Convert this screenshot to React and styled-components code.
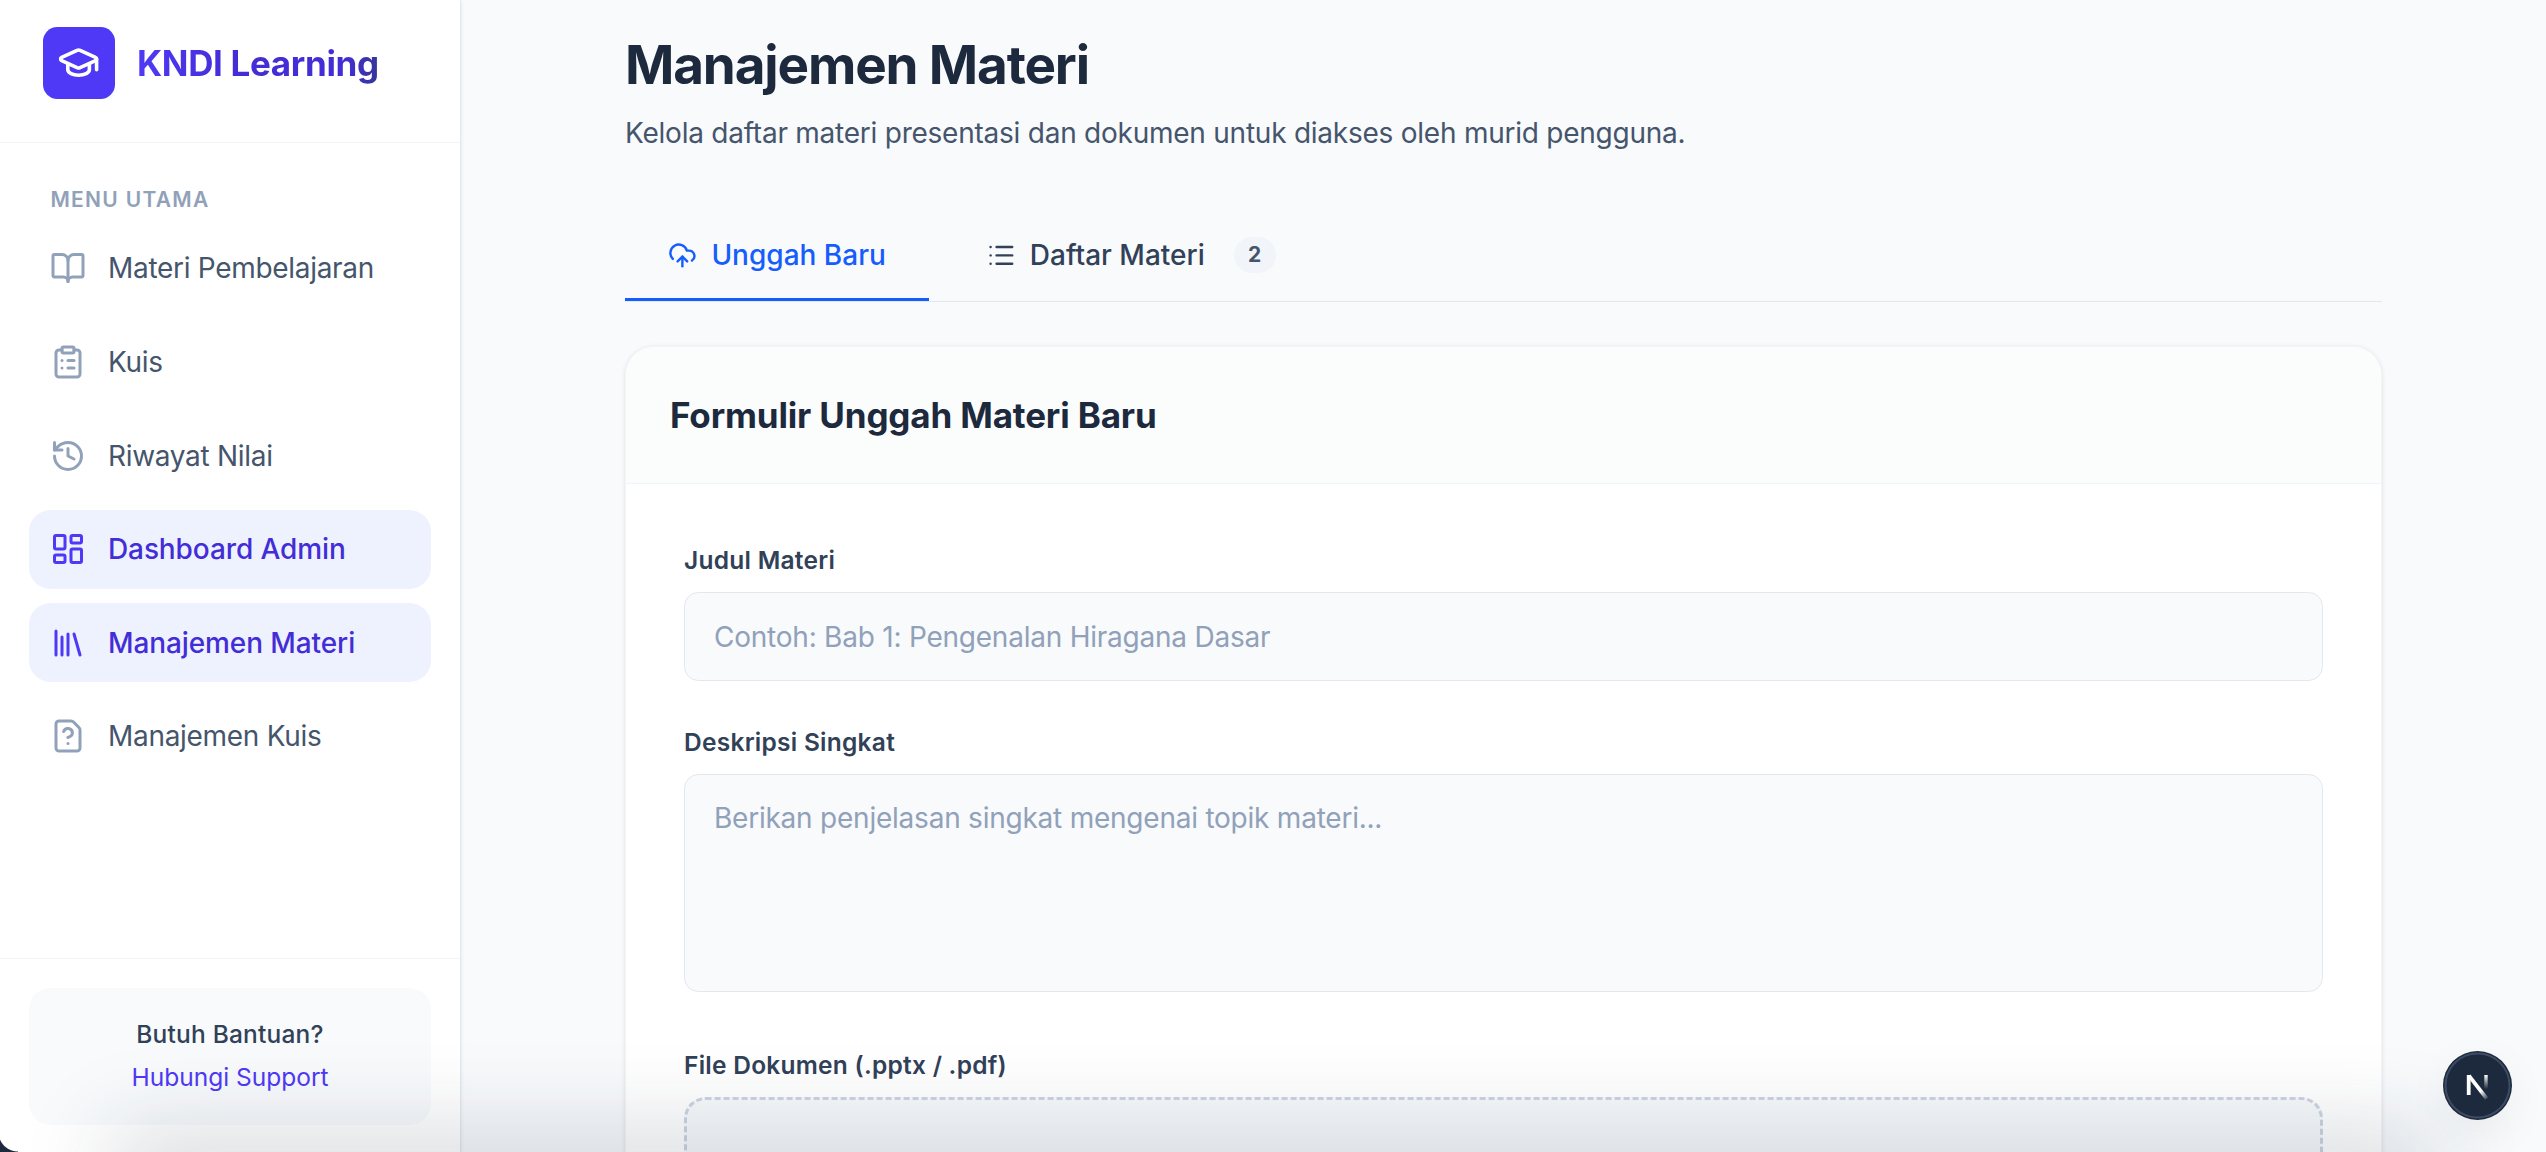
import React from 'react'
import styled, { createGlobalStyle, css } from 'styled-components'
import {
	BookOpen,
	ClipboardList,
	CloudUpload,
	FileQuestionMark,
	GraduationCap,
	History,
	LayoutDashboard,
	Library,
	List,
} from 'lucide-react'

const menu = [
	{ label: 'Materi Pembelajaran', icon: BookOpen },
	{ label: 'Kuis', icon: ClipboardList },
	{ label: 'Riwayat Nilai', icon: History },
	{ label: 'Dashboard Admin', icon: LayoutDashboard, active: true },
	{ label: 'Manajemen Materi', icon: Library, active: true },
	{ label: 'Manajemen Kuis', icon: FileQuestionMark },
]

function Sidebar() {
	return (
		<Aside>
			<Brand>
				<Logo>
					<GraduationCap size={43.2} />
				</Logo>
				<BrandName>KNDI Learning</BrandName>
			</Brand>

			<Nav>
				<NavHeading>Menu Utama</NavHeading>
				{menu.map(({ label, icon: Icon, active }) => (
					<NavItem key={label} $active={active}>
						<Icon size={36} />
						<span>{label}</span>
					</NavItem>
				))}
			</Nav>

			<AsideFooter>
				<Help>
					<HelpTitle>Butuh Bantuan?</HelpTitle>
					<HelpLink>Hubungi Support</HelpLink>
				</Help>
			</AsideFooter>
		</Aside>
	)
}

function DevBadge() {
	return (
		<Badge>
			<svg width="69" height="69" viewBox="0 0 69 69" fill="none">
				<defs>
					<linearGradient id="diagonal" x1="38" y1="40" x2="45" y2="49" gradientUnits="userSpaceOnUse">
						<stop stopColor="#fff" />
						<stop offset="1" stopColor="#fff" stopOpacity="0" />
					</linearGradient>
					<linearGradient id="stem" x1="43" y1="24" x2="43" y2="38" gradientUnits="userSpaceOnUse">
						<stop stopColor="#fff" />
						<stop offset="1" stopColor="#fff" stopOpacity="0" />
					</linearGradient>
				</defs>
				<circle cx="34.5" cy="34.5" r="34.5" fill="#1d293d" />
				<circle cx="34.5" cy="34.5" r="32" stroke="#3c4c63" strokeWidth="2" />
				<path d="M25.7 44V24" stroke="#fff" strokeWidth="3.8" />
				<path d="M25.9 24.6L43.7 47.6" stroke="url(#diagonal)" strokeWidth="3.8" />
				<path d="M43 24V38" stroke="url(#stem)" strokeWidth="3.4" />
			</svg>
		</Badge>
	)
}

function App() {
	return (
		<Page>
			<GlobalStyle />
			<Sidebar />

			<Main>
				<Content>
					<Title>Manajemen Materi</Title>
					<Subtitle>Kelola daftar materi presentasi dan dokumen untuk diakses oleh murid pengguna.</Subtitle>

					<Tabs>
						<Tab $active>
							<CloudUpload size={28.8} />
							Unggah Baru
						</Tab>
						<Tab>
							<List size={28.8} />
							Daftar Materi
							<Count>2</Count>
						</Tab>
					</Tabs>

					<Card>
						<CardHeader>
							<CardTitle>Formulir Unggah Materi Baru</CardTitle>
						</CardHeader>
						<Form>
							<Label htmlFor="judul">Judul Materi</Label>
							<Input id="judul" placeholder="Contoh: Bab 1: Pengenalan Hiragana Dasar" />
							<Label htmlFor="deskripsi">Deskripsi Singkat</Label>
							<TextArea id="deskripsi" placeholder="Berikan penjelasan singkat mengenai topik materi..." />
							<Label>File Dokumen (.pptx / .pdf)</Label>
							<DropZone />
						</Form>
					</Card>
				</Content>
			</Main>

			<DevBadge />
			<BottomShade />
			<Corner />
		</Page>
	)
}

export default App

const GlobalStyle = createGlobalStyle`
	* {
		box-sizing: border-box;
	}

	body {
		margin: 0;
		overflow: hidden;
		background: #f8fafc;
		color: #1d293d;
		font-family: Inter, "Liberation Sans", sans-serif;
		font-size: 28px;
		-webkit-font-smoothing: antialiased;
	}

	h1, h2, p {
		margin: 0;
	}
`

const Page = styled.div`
	position: relative;
	display: flex;
	height: 1152px;
	overflow: hidden;
`

const Aside = styled.aside`
	flex: none;
	display: flex;
	flex-direction: column;
	width: 461px;
	background: #fff;
	border-right: 1px solid #e2e8f0;
	box-shadow: 0 2px 4px rgba(0, 0, 0, 0.09);
	z-index: 1;
`

const Brand = styled.div`
	display: flex;
	align-items: center;
	gap: 22px;
	height: 143px;
	padding: 27px 43px 43px;
	border-bottom: 1px solid #f1f5f9;
`

const Logo = styled.div`
	display: grid;
	place-items: center;
	width: 72px;
	height: 72px;
	border-radius: 14.4px;
	background: #4f39f6;
	color: #fff;
`

const BrandName = styled.span`
	font-size: 35px;
	font-weight: 700;
	letter-spacing: -0.34px;
	line-height: 50px;
	background: linear-gradient(to right, #4f39f6, #432dd7 40%, #432dd7 85%, #37359a);
	background-clip: text;
	color: transparent;
`

const Nav = styled.nav`
	flex: 1;
	display: flex;
	flex-direction: column;
	gap: 14.4px;
	padding: 42.4px 28.8px 0;
`

const NavHeading = styled.div`
	height: 29px;
	padding-left: 21.6px;
	font-size: 21px;
	font-weight: 600;
	line-height: 29px;
	letter-spacing: 1.3px;
	text-transform: uppercase;
	color: #90a1b9;
`

const NavItem = styled.a`
	display: flex;
	align-items: center;
	gap: 22.4px;
	height: 79.2px;
	padding: 0 20.8px;
	border-radius: 21.6px;
	color: #45556c;
	letter-spacing: -0.3px;

	svg {
		color: #90a1b9;
	}

	${props => props.$active && css`
		background: #eef2ff;
		color: #432dd7;
		font-weight: 500;
		letter-spacing: -0.1px;

		svg {
			color: #4f39f6;
		}
	`}
`

const AsideFooter = styled.div`
	height: 194px;
	padding: 29px;
	border-top: 1px solid #f1f5f9;
`

const Help = styled.div`
	height: 137px;
	padding-top: 25px;
	border-radius: 21.6px;
	background: #f8fafc;
	text-align: center;
	font-size: 24.5px;
	line-height: 43px;
`

const HelpTitle = styled.p`
	font-weight: 500;
	letter-spacing: 0.2px;
	color: #314158;
`

const HelpLink = styled.a`
	color: #4f39f6;
`

const Main = styled.main`
	flex: 1;
	display: flex;
	justify-content: center;
`

const Content = styled.div`
	display: flex;
	flex-direction: column;
	width: 1757px;
	padding-top: 33px;
`

const Title = styled.h1`
	font-size: 53px;
	font-weight: 700;
	line-height: 65px;
	letter-spacing: -1.15px;
`

const Subtitle = styled.p`
	margin-top: 14px;
	line-height: 43px;
	letter-spacing: -0.24px;
	color: #45556c;
`

const Tabs = styled.div`
	flex: none;
	display: flex;
	gap: 14.4px;
	height: 90px;
	margin-top: 57px;
	border-bottom: 1px solid #e2e8f0;
`

const Tab = styled.button`
	display: flex;
	align-items: center;
	gap: 14.4px;
	padding: 0 43.2px;
	border: 0;
	border-bottom: 3px solid ${props => (props.$active ? '#155dfc' : 'transparent')};
	background: none;
	color: ${props => (props.$active ? '#155dfc' : '#314158')};
	font: inherit;
	font-weight: 500;
`

const Count = styled.span`
	margin-left: 14.4px;
	padding: 0 14.4px;
	border-radius: 18px;
	background: #f1f5f9;
	color: #45556c;
	font-size: 21px;
	font-weight: 700;
	line-height: 36px;
`

const Card = styled.section`
	flex: none;
	height: 1100px;
	margin-top: 44px;
	border: 1px solid #f1f5f9;
	border-radius: 28.8px;
	background: #fff;
	box-shadow: 0 1px 5px rgba(0, 0, 0, 0.1);
	overflow: hidden;
`

const CardHeader = styled.header`
	display: flex;
	align-items: center;
	height: 137px;
	padding: 0 44px;
	border-bottom: 1px solid #f1f5f9;
	background: #fbfdfd;
`

const CardTitle = styled.h2`
	font-size: 35px;
	font-weight: 700;
	letter-spacing: -0.16px;
`

const Form = styled.div`
	display: flex;
	flex-direction: column;
	padding: 58px 58px 0;
`

const Label = styled.label`
	height: 36px;
	margin-bottom: 14px;
	font-size: 24.5px;
	font-weight: 600;
	line-height: 36px;
	letter-spacing: 0.26px;
	color: #314158;
`

const field = css`
	border: 1px solid #e2e8f0;
	border-radius: 14.4px;
	background: #f8fafc;
	font: inherit;
	letter-spacing: -0.23px;
	outline: 0;

	&::placeholder {
		color: #90a1b9;
	}
`

const Input = styled.input`
	${field}
	height: 89px;
	padding: 0 29px;
	margin-bottom: 43px;
`

const TextArea = styled.textarea`
	${field}
	height: 218px;
	padding: 22px 29px;
	margin-bottom: 55px;
	line-height: 43px;
	resize: none;
`

const DropZone = styled.div`
	height: 260px;
	border: 3px dashed #cad5e2;
	border-radius: 21.6px;
	background: #f8fafc;
`

const Badge = styled.div`
	position: absolute;
	right: 34px;
	bottom: 32px;
	width: 69px;
	height: 69px;
	border-radius: 50%;
	box-shadow: 0 14px 44px rgba(0, 0, 0, 0.06);
	z-index: 2;

	svg {
		display: block;
	}
`

// shade cast up from below the window edge
const BottomShade = styled.div`
	position: absolute;
	left: 130px;
	right: 130px;
	bottom: -40px;
	height: 40px;
	box-shadow: 0 0 90px 20px rgba(29, 41, 61, 0.18);
	pointer-events: none;
	z-index: 1;
`

const Corner = styled.div`
	position: absolute;
	left: 0;
	bottom: 0;
	width: 18px;
	height: 20px;
	background: radial-gradient(circle at 100% 0, transparent 19px, #1d293d 20px);
	z-index: 2;
`
